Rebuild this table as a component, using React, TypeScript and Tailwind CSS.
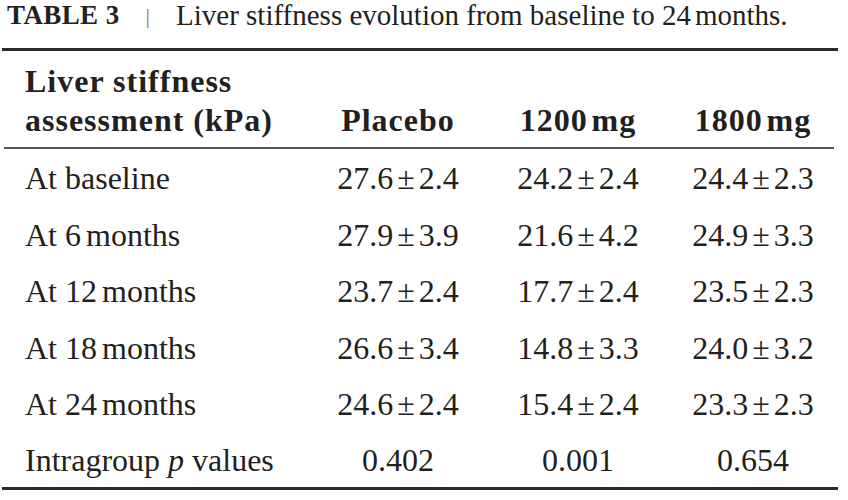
import React from "react";

const H = "\u200A";
const data: [string, string, [string, string][]][] = [
  ["At baseline", "", [["27.6", "2.4"], ["24.2", "2.4"], ["24.4", "2.3"]]],
  ["At 6", "months", [["27.9", "3.9"], ["21.6", "4.2"], ["24.9", "3.3"]]],
  ["At 12", "months", [["23.7", "2.4"], ["17.7", "2.4"], ["23.5", "2.3"]]],
  ["At 18", "months", [["26.6", "3.4"], ["14.8", "3.3"], ["24.0", "3.2"]]],
  ["At 24", "months", [["24.6", "2.4"], ["15.4", "2.4"], ["23.3", "2.3"]]],
];

function PM({ v }: { v: [string, string] }) {
  return (
    <div className="text-center">
      {v[0]}
      <span className="mx-[4px]">±</span>
      {v[1]}
    </div>
  );
}

export default function App() {
  return (
    <div
      className="w-[848px] h-[500px] bg-white text-[#231f20] overflow-hidden"
      style={{ fontFamily: '"Liberation Serif", "Times New Roman", serif' }}
    >
      <div className="h-[48px] pt-[1px] pl-[7px] flex items-start text-[29px] leading-[29px] whitespace-nowrap">
        <span className="font-bold text-[27px] tracking-[0.4px] leading-[29px]">TABLE 3</span>
        <span className="ml-[26px] mr-[26px] text-[#777] text-[22px] leading-[29px]">|</span>
        <span>
          Liver stiffness evolution from baseline to 24<span className="ml-[4px]">months.</span>
        </span>
      </div>
      <div className="ml-[2px] w-[836px] h-[3px] bg-[#2a2a2a]" />
      <div className="grid grid-cols-[310px_176px_184px_166px] items-end h-[96px] pt-[11px] pb-[7px] font-bold text-[32px] leading-[39px] tracking-[1px]">
        <div className="pl-[25px] whitespace-nowrap">
          Liver stiffness
          <br />
          assessment (kPa)
        </div>
        <div className="text-center">Placebo</div>
        <div className="text-center">1200{H}mg</div>
        <div className="text-center">1800{H}mg</div>
      </div>
      <div className="ml-[4px] w-[830px] h-[1.5px] bg-[#555]" />
      <div className="pt-[2px] text-[32px] leading-[39px]">
        {data.map(([label, unit, vals]) => (
          <div key={label} className="grid grid-cols-[310px_176px_184px_166px] items-center h-[56.5px] whitespace-nowrap">
            <div className="pl-[25px]">
              {label}
              {unit && <span className="ml-[5px]">{unit}</span>}
            </div>
            {vals.map((v, i) => (
              <PM key={i} v={v} />
            ))}
          </div>
        ))}
        <div className="grid grid-cols-[310px_176px_184px_166px] items-center h-[54px] whitespace-nowrap">
          <div className="pl-[25px]">
            Intragroup <i>p</i> values
          </div>
          <div className="text-center">0.402</div>
          <div className="text-center">0.001</div>
          <div className="text-center">0.654</div>
        </div>
      </div>
      <div className="ml-[2px] w-[836px] h-[3px] bg-[#2a2a2a]" />
    </div>
  );
}
